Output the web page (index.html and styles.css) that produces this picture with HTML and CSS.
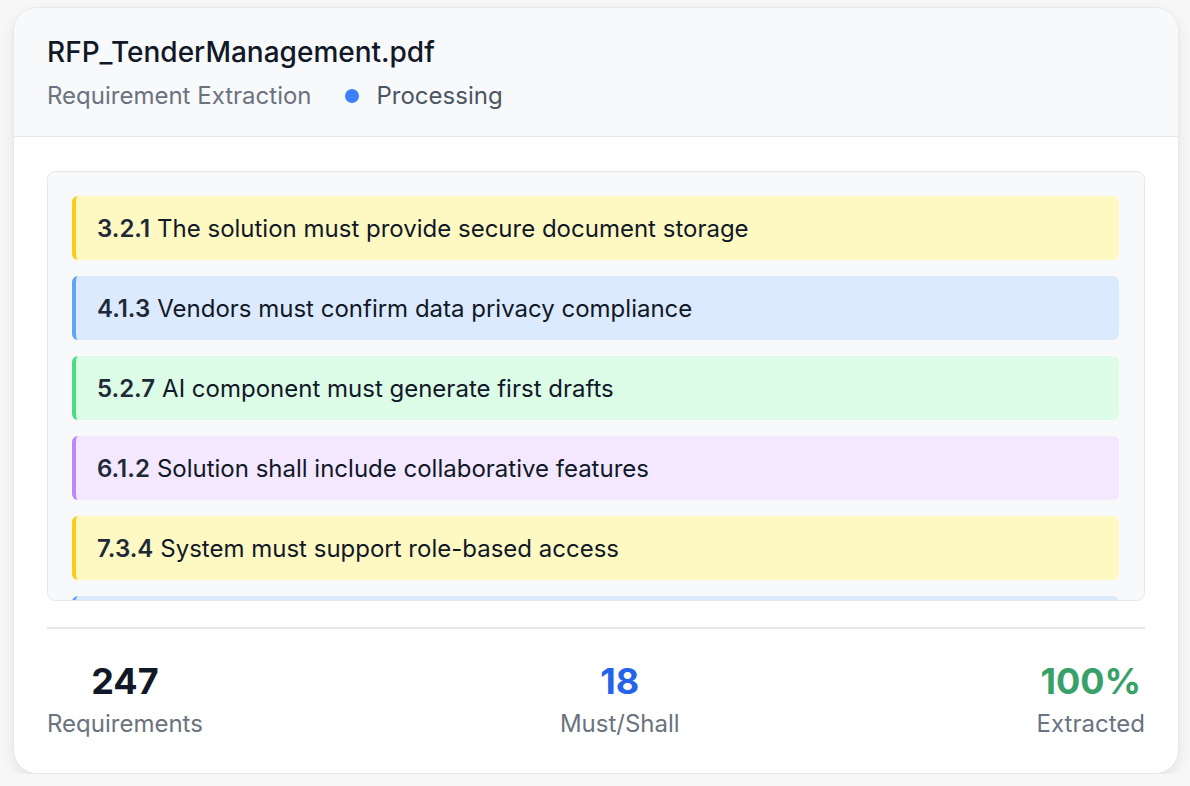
FILE: index.html
```html
<!DOCTYPE html>
<html lang="en">
<head>
    <meta charset="UTF-8">
    <meta name="viewport" content="width=device-width, initial-scale=1.0">
    <title>RFP Requirement Extraction</title>
    <link rel="stylesheet" href="styles.css">
</head>
<body>

<div class="card">
    <div class="card-header">
        <div class="file-name">RFP_TenderManagement.pdf</div>
        <div class="subtitle">
            <span>Requirement Extraction</span>
            <span class="status"><span class="dot"></span>Processing</span>
        </div>
    </div>

    <div class="card-body">
        <div class="req-list">
            <div class="req yellow"><b>3.2.1</b> The solution must provide secure document storage</div>
            <div class="req blue"><b>4.1.3</b> Vendors must confirm data privacy compliance</div>
            <div class="req green"><b>5.2.7</b> AI component must generate first drafts</div>
            <div class="req purple"><b>6.1.2</b> Solution shall include collaborative features</div>
            <div class="req yellow"><b>7.3.4</b> System must support role-based access</div>
            <div class="req blue"><b>8.2.1</b> Vendors shall provide audit trail reporting</div>
        </div>

        <div class="stats">
            <div class="stat">
                <div class="num">247</div>
                <div class="label">Requirements</div>
            </div>
            <div class="stat">
                <div class="num num-blue">18</div>
                <div class="label">Must/Shall</div>
            </div>
            <div class="stat">
                <div class="num num-green">100%</div>
                <div class="label">Extracted</div>
            </div>
        </div>
    </div>
</div>

</body>
</html>
```

FILE: styles.css
```css
body {
    margin: 0;
    padding: 7px 11px 0 13px;
    font-family: Inter, "Noto Sans", sans-serif;
    background-color: #f7f7f8;
}

.card {
    background: #fff;
    border: 1px solid #e5e7eb;
    border-radius: 24px;
    overflow: hidden;
    box-shadow: 0 6px 14px rgba(0, 0, 0, 0.08);
}

.card-header {
    background: #f8f9fb;
    border-bottom: 1px solid #e5e7eb;
    padding: 28px 33px 26px;
}

.file-name {
    font-size: 28px;
    line-height: 32px;
    font-weight: 500;
    color: #111827;
}

.subtitle {
    margin-top: 14px;
    display: flex;
    align-items: center;
    gap: 33px;
    font-size: 24px;
    line-height: 28px;
    color: #6b7280;
}

.status {
    display: flex;
    align-items: center;
    color: #4b5563;
}

.dot {
    width: 14px;
    height: 14px;
    border-radius: 50%;
    background: #3b82f6;
    margin-right: 18px;
}

.card-body {
    padding: 34px 33px 35px;
}

.req-list {
    height: 404px;
    overflow: hidden;
    background: #f8f9fb;
    border: 1px solid #e5e7eb;
    border-radius: 8px;
    padding: 24px 25px 0 24px;
    display: flex;
    flex-direction: column;
    gap: 16px;
}

.req {
    flex-shrink: 0;
    height: 64px;
    display: flex;
    align-items: center;
    gap: 7px;
    padding-left: 21px;
    border-left: 4px solid;
    border-radius: 6px;
    font-size: 24px;
    color: #111827;
    box-sizing: border-box;
}

.req b {
    font-weight: 600;
    color: #1f2937;
}

.yellow { background: #fef9c3; border-color: #facc15; }
.blue { background: #dbeafe; border-color: #60a5fa; }
.green { background: #dcfce7; border-color: #4ade80; }
.purple { background: #f3e8ff; border-color: #c084fc; }

.stats {
    margin-top: 26px;
    border-top: 2px solid #e5e7eb;
    padding-top: 32px;
    display: flex;
    justify-content: space-between;
}

.stat {
    text-align: center;
}

.num {
    font-size: 36px;
    line-height: 40px;
    font-weight: 700;
    color: #111827;
}

.num-blue { color: #2563eb; }
.num-green { color: #38a169; }

.label {
    margin-top: 9px;
    font-size: 24px;
    line-height: 28px;
    color: #6b7280;
}
```
